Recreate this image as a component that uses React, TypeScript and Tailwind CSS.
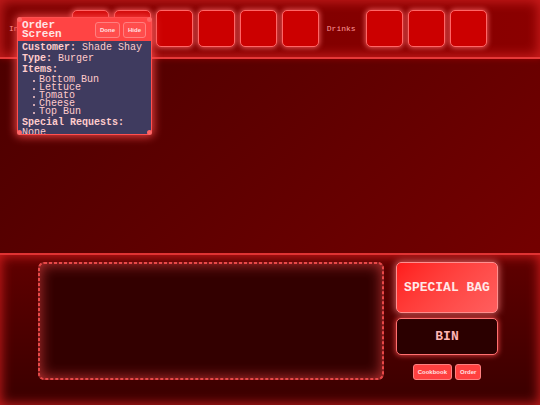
type TrayProps = {
  label: string;
  count: number;
};

const items = ["Bottom Bun", "Lettuce", "Tomato", "Cheese", "Top Bun"];

const Tray = ({ label, count }: TrayProps) => {
  return (
    <section className="flex items-center gap-[10px]" aria-label={label}>
      <h2 className="text-[8px] leading-none text-[#ff9999]">{label}</h2>
      <div className="flex gap-[5px]">
        {Array.from({ length: count }, (_, i) => (
          <button
            key={i}
            aria-label={`${label} ${i + 1}`}
            className="size-[37px] rounded-[5px] border border-[#ff6666] bg-[#cc0000] shadow-[0_0_5px_1px_rgba(255,102,102,0.8)]"
          />
        ))}
      </div>
    </section>
  );
};

const OrderScreen = () => {
  const windowButton =
    "h-4 rounded-[3px] border border-[#ff8080] bg-[#ff4d4d] px-1 font-['Liberation_Sans',sans-serif] text-[6px] font-bold leading-none text-[#ffe0e0]";

  return (
    <aside className="absolute left-[17px] top-[17px] h-[118px] w-[135px] rounded-[4px] shadow-[0_0_9px_2px_rgba(255,77,77,0.8)]">
      <div className="flex h-full flex-col overflow-hidden rounded-[4px] border border-[#ff5050] bg-[#3f3b5f] text-[#ffcccc]">
        <div className="flex h-[23px] shrink-0 items-center justify-between bg-[#ff4444] pl-1 pr-[5px]">
          <h1 className="w-12 text-[11px] font-bold leading-[9px] text-[#ffe5e5]">
            Order Screen
          </h1>
          <div className="flex gap-[3px]">
            <button className={`${windowButton} w-[25px]`}>Done</button>
            <button className={`${windowButton} w-[23px]`}>Hide</button>
          </div>
        </div>
        <div className="whitespace-nowrap px-1 pt-px text-[10px] leading-[11px]">
          <p>
            <strong>Customer:</strong> Shade Shay
          </p>
          <p>
            <strong>Type:</strong> Burger
          </p>
          <p>
            <strong>Items:</strong>
          </p>
          <ul className="my-px pl-[11px] leading-[8px]">
            {items.map((item) => (
              <li key={item} className="flex items-center gap-1">
                <span className="mt-0.5 size-0.5 rounded-full bg-[#ffcccc]" />
                {item}
              </li>
            ))}
          </ul>
          <p>
            <strong>Special Requests:</strong>
          </p>
          <p className="leading-[9px]">None</p>
        </div>
      </div>
      <span className="absolute left-0 top-0 size-[5px] rounded-full bg-[#ff6666]" />
      <span className="absolute right-0 top-0 size-[5px] rounded-full bg-[#ff6666]" />
      <span className="absolute bottom-0 left-0 size-[5px] rounded-full bg-[#ff6666]" />
      <span className="absolute bottom-0 right-0 size-[5px] rounded-full bg-[#ff6666]" />
    </aside>
  );
};

const App = () => {
  const smallButton =
    "h-4 rounded-[3px] border border-[#ff8080] bg-[#ff4040] px-1 font-['Liberation_Sans',sans-serif] text-[6px] font-bold leading-none text-[#ffe0e0]";

  return (
    <div className="relative flex min-h-screen flex-col bg-linear-135 from-[#4a0000] to-[#7c0000] font-['Liberation_Mono',monospace]">
      <header className="flex items-center gap-2 border-b-2 border-[#e63939] bg-linear-to-r from-[#770000] to-[#8b0000] py-[10px] pl-[9px] shadow-[inset_0_0_12px_2px_rgba(255,51,51,0.55),0_0_6px_rgba(255,0,0,0.3)]">
        <Tray label="Ingredients" count={6} />
        <Tray label="Drinks" count={3} />
      </header>

      <main className="flex-1" />

      <footer className="flex gap-3 border-t-2 border-[#e03333] bg-linear-to-b from-[#600000] to-[#3a0000] pb-[25px] pl-[38px] pr-[42px] pt-[7px] shadow-[inset_0_0_12px_1px_rgba(255,40,40,0.7)]">
        <div className="relative min-w-0 flex-1 rounded-[6px] bg-[#330000] shadow-[inset_0_0_14px_2px_rgba(255,77,77,0.65)]">
          {/* short dashes round the cooking area */}
          <svg className="absolute inset-0 size-full" aria-hidden="true">
            <rect
              x="1"
              y="1"
              rx="5"
              className="h-[calc(100%-2px)] w-[calc(100%-2px)] fill-none stroke-[#e84848] stroke-2"
              strokeDasharray="3 2"
            />
          </svg>
        </div>
        <div className="flex w-[102px] flex-col">
          <button className="h-[51px] whitespace-nowrap rounded-[5px] border border-[#ff9090] bg-linear-135 from-[#ff1a1a] to-[#ff5e5e] text-[13px] font-bold text-[#ffe8e8] shadow-[0_0_7px_1px_rgba(255,128,128,0.75)]">
            SPECIAL BAG
          </button>
          <button className="mt-[5px] h-[37px] rounded-[5px] border border-[#ff7070] bg-[#2b0000] text-[13px] font-bold text-[#ffb3b3] shadow-[0_0_5px_1px_rgba(255,77,77,0.7)]">
            BIN
          </button>
          <div className="mt-[9px] flex justify-center gap-[3px]">
            <button className={smallButton}>Cookbook</button>
            <button className={smallButton}>Order</button>
          </div>
        </div>
      </footer>

      <OrderScreen />
    </div>
  );
};

export default App;
